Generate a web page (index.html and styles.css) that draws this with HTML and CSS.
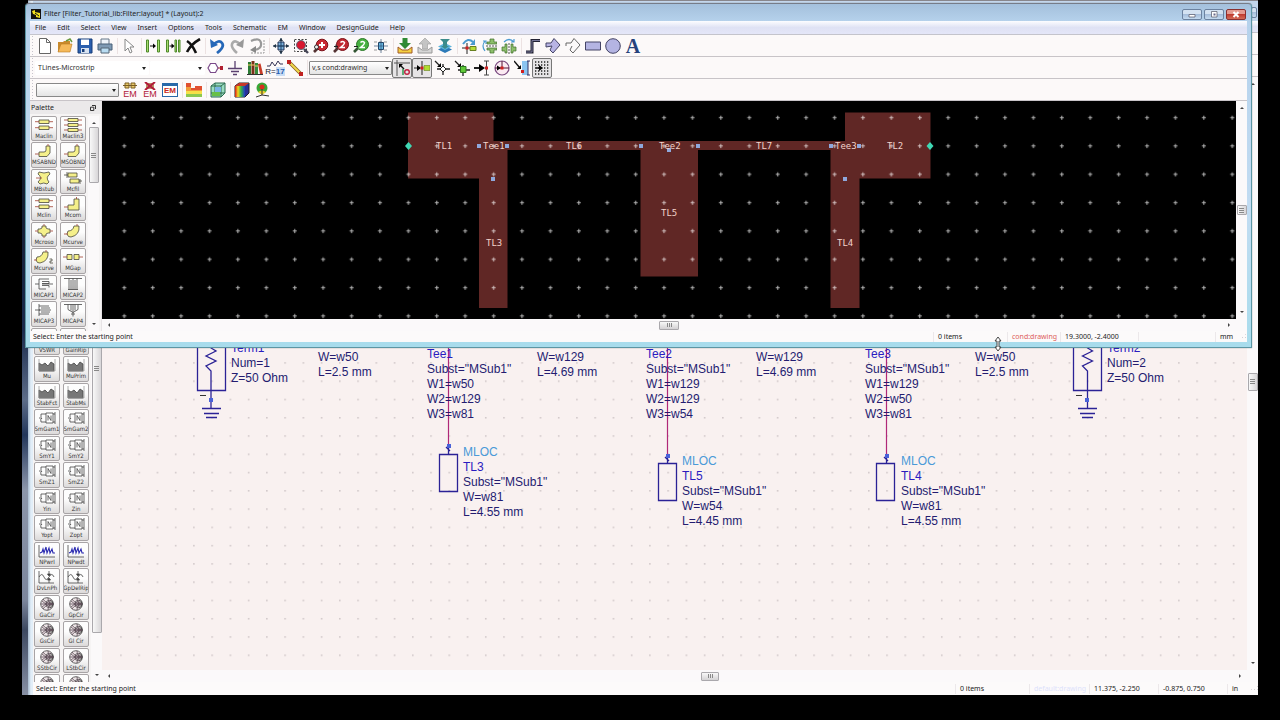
FILE: index.html
```html
<!DOCTYPE html>
<html lang="en">
<head>
<meta charset="utf-8">
<title>Filter [Filter_Tutorial_lib:Filter:layout] * (Layout):2</title>
<link rel="stylesheet" href="styles.css">
</head>
<body>
<svg class="sprite" aria-hidden="true">
  <defs>
    <linearGradient id="rainbow"><stop offset="0" stop-color="#d01818"/><stop offset=".3" stop-color="#f6d420"/><stop offset=".6" stop-color="#35b443"/><stop offset="1" stop-color="#2038c8"/></linearGradient>
    <pattern id="crosses" x="109.8" y="103.2" width="28.41" height="28.34" patternUnits="userSpaceOnUse"><path d="M12.5 14.5h4M14.5 12.5v4" stroke="#fff" stroke-opacity=".72"/></pattern>
    <pattern id="dots" x="111.5" y="353.5" width="18.24" height="18.27" patternUnits="userSpaceOnUse"><rect x="9" y="9" width="1" height="1" fill="#94888e"/></pattern>
  </defs>
  <symbol class="strip" id="p-lin" viewBox="0 0 20 14"><path d="M5 2h10v3.500H5zM5 8h10v3.500H5z"/><path d="M1 3.700h4m10 0h4M1 9.700h4m10 0h4" stroke="#a04030"/></symbol>
  <symbol class="strip" id="p-lin3" viewBox="0 0 20 14"><path d="M5 .5h10v3H5zM5 5.500h10v3H5zM5 10.500h10v3H5z"/><path d="M1 2h4m10 0h4M1 7h4m10 0h4M1 12h4m10 0h4" stroke="#a04030"/></symbol>
  <symbol class="strip" id="p-bend" viewBox="0 0 20 14"><path d="M5 8h5q2 0 2-2V2h4v7l-3 3.500H5z"/><path d="M1 10h4M14 2V0" stroke="#a04030"/></symbol>
  <symbol class="strip" id="p-stub" viewBox="0 0 20 14"><path d="M5 1q5 2 10 0l1 2q-5 3.500-1 8l-2 2q-3-2-7 0l-2-2q5-4.500 0-8z"/><path d="M2 7h6" stroke="#a04030"/></symbol>
  <symbol class="strip" id="p-fil" viewBox="0 0 20 14"><path d="M5 2h9v4H5zM7 8h9v4H7z"/><path d="M4 1v6m13 1v5M1 4h4m11 6h3"/></symbol>
  <symbol class="strip" id="p-corn" viewBox="0 0 20 14"><path d="M5 8h6V2h5v11H5z"/><path d="M1 10h4M13.500 2V0" stroke="#a04030"/></symbol>
  <symbol class="strip" id="p-cros" viewBox="0 0 20 14"><path d="M8 2h4v2l2 1h2v4h-2l-2 1v2H8v-2L6 9H4V5h2l2-1z"/><path d="M1 7h3m12 0h3M10 2V0m0 12v2" stroke="#a04030"/></symbol>
  <symbol class="strip" id="p-curve" viewBox="0 0 20 14"><path d="M5 7q5 0 6-5h5q1 9-8 11-3 .5-4-3z"/><path d="M1 10h4M14 2V0" stroke="#a04030"/></symbol>
  <symbol class="strip" id="p-curve2" viewBox="0 0 20 14"><path d="M3 7q5 0 6-5h5q1 9-8 11-3 .5-4-3z"/><path d="M0 10h3M12 2V0" stroke="#a04030"/><path d="M15.500 9h2.500v2h-2v2h3" fill="none"/></symbol>
  <symbol class="strip" id="p-gap" viewBox="0 0 20 14"><path d="M4 4.500h5v5H4zM11 4.500h5v5h-5z"/><path d="M0 7h4m12 0h4" stroke="#a04030"/></symbol>
  <symbol class="line" id="p-cap1" viewBox="0 0 20 14"><path d="M1 7h4M5 2v10M5 2h10M8 4.500h7v2H8M8 8.500h7v2M5 12h7M15 7h4M8 7h7"/></symbol>
  <symbol class="line" id="p-cap2" viewBox="0 0 20 14"><path d="M1 1.500h18M6 1.500v11M8 3v9.500M10 1.500v11M12 3v9.500M14 1.500v11M5 12.500h10"/></symbol>
  <symbol class="line" id="p-cap3" viewBox="0 0 20 14"><path d="M1 7h5M5 1v12M5 3h10M7 5h9M5 7h12M7 9h9M5 11h10"/></symbol>
  <symbol class="line" id="p-cap4" viewBox="0 0 20 14"><path d="M1 1.500h18M5 1.500v5l5 3 5-3v-5M8 1.500v6M10 1.500v12M12 1.500v6M8 11h4"/></symbol>
  <symbol class="line" id="p-mu" viewBox="0 0 20 14"><path d="M2 13V5l3 2 3-2 3 3 3-4 3 2v7z" fill="#777"/><path d="M2 1v12h16V1" stroke="#999"/></symbol>
  <symbol class="line" id="p-n" viewBox="0 0 20 14"><path d="M9 2h7v10H9z" fill="#fff"/><path d="M11 9.500v-5l3 5v-5M4 3h5M4 11h5M16 3h2M16 11h2M18 1v12M4 3v3M2 7h3q-2 1-1 4"/></symbol>
  <symbol class="line" id="p-nf" viewBox="0 0 20 14"><path d="M2 1v12h16"/><path d="M3 9l2-1 1-3 1 4 2-6 1 6 2-5 1 5 2-4 1 4h2" stroke="#2a2ab0" stroke-width="1.100"/></symbol>
  <symbol class="line" id="p-dv" viewBox="0 0 20 14"><path d="M2 1v12h15M2 7q3-5 5 0t5 0 5 0M12 1v4M12 9v4"/><path d="M10.500 4h3L12 6zM10.500 10h3L12 8z" fill="#333"/></symbol>
  <symbol class="line" id="p-smith" viewBox="0 0 20 14"><circle cx="10" cy="7" r="6.300" fill="#ece4e6"/><circle cx="12.500" cy="7" r="3.700"/><circle cx="14" cy="7" r="2"/><path d="M3.700 7h12.600M6 2q3 5 10 5Q9 7 6 12M11 .8q0 6 5 6.200-5 0-5 6.200M5 4l9 7M5 10l9-7" stroke="#5c4a56"/></symbol>
</svg>

<main class="desktop">

  <section class="win win-back" aria-label="Schematic window">
    <div class="titlebar"><span class="title"></span><button class="wbtn edge" aria-label="Close schematic"></button></div>
    <div class="menubar"></div>
    <div class="toolbar"></div>
    <div class="toolbar"></div>
    <div class="main">
      <aside class="dock">
        <div class="dock-head"></div>
        <div class="dock-body">
          <div class="parts scrolled">
            <button class="part"><svg><use href="#p-n"/></svg>VSWR</button><button class="part"><svg><use href="#p-n"/></svg>GainRip</button>
            <button class="part"><svg><use href="#p-mu"/></svg>Mu</button><button class="part"><svg><use href="#p-mu"/></svg>MuPrim</button>
            <button class="part"><svg><use href="#p-mu"/></svg>StabFct</button><button class="part"><svg><use href="#p-mu"/></svg>StabMs</button>
            <button class="part"><svg><use href="#p-n"/></svg>SmGam1</button><button class="part"><svg><use href="#p-n"/></svg>SmGam2</button>
            <button class="part"><svg><use href="#p-n"/></svg>SmY1</button><button class="part"><svg><use href="#p-n"/></svg>SmY2</button>
            <button class="part"><svg><use href="#p-n"/></svg>SmZ1</button><button class="part"><svg><use href="#p-n"/></svg>SmZ2</button>
            <button class="part"><svg><use href="#p-n"/></svg>Yin</button><button class="part"><svg><use href="#p-n"/></svg>Zin</button>
            <button class="part"><svg><use href="#p-n"/></svg>Yopt</button><button class="part"><svg><use href="#p-n"/></svg>Zopt</button>
            <button class="part"><svg><use href="#p-nf"/></svg>NPwrI</button><button class="part"><svg><use href="#p-nf"/></svg>NPwdt</button>
            <button class="part"><svg><use href="#p-dv"/></svg>DvLnPh</button><button class="part"><svg><use href="#p-dv"/></svg>GpDelRip</button>
            <button class="part"><svg><use href="#p-smith"/></svg>GaCir</button><button class="part"><svg><use href="#p-smith"/></svg>GpCir</button>
            <button class="part"><svg><use href="#p-smith"/></svg>GsCir</button><button class="part"><svg><use href="#p-smith"/></svg>Gl Cir</button>
            <button class="part"><svg><use href="#p-smith"/></svg>SStbCir</button><button class="part"><svg><use href="#p-smith"/></svg>LStbCir</button>
            <button class="part"><svg><use href="#p-smith"/></svg></button><button class="part"><svg><use href="#p-smith"/></svg></button>
          </div>
          <div class="vbar"><i class="up"></i><div class="thumb thumb-long"></div><i class="down"></i></div>
        </div>
      </aside>
      <div class="view">
        <div class="view-row">
          <svg class="canvas schematic" role="img" aria-label="Schematic">
            <g transform="translate(-102 -77)">
              <rect x="111" y="80" width="1128" height="582" fill="url(#dots)" shape-rendering="crispEdges"/>
              <g fill="none" stroke="#2b2296" stroke-width="1.300">
                <path d="M197.500 340v50.500h28V340M211 340v8l5 3-10 5 10 5-10 5 5 5V408"/>
                <path d="M202 408.500h19M204 413.500h15M206 417.500h11"/>
                <path d="M1073.500 340v50.500h28V340M1087.500 340v8l5 3-10 5 10 5-10 5 5 5V408"/>
                <path d="M1078 408.500h19M1080 413.500h15M1082 417.500h11"/>
                <path d="M439.500 454.500h18v37h-18zM658.500 463.500h18v37h-18zM876.500 463.500h18v37h-18z"/>
                <path d="M448.500 446v8M446 447l4 4M667.500 456v7M665 457l4 4M886.500 456v7M884 457l4 4"/>
              </g>
              <path d="M200 395.500h6M1076 395.500h6" stroke="#333"/>
              <path d="M448.500 340v106M667.500 340v116M886.500 340v116" stroke="#b02878" stroke-width="1.200"/>
              <g fill="#4a62d8"><rect x="209" y="398" width="4" height="4"/><rect x="1085" y="398" width="4" height="4"/><rect x="447" y="444" width="4" height="4"/><rect x="666" y="454" width="4" height="4"/><rect x="885" y="454" width="4" height="4"/></g>
              <g class="notes">
                <text y="352"><tspan class="id" x="231">Term1</tspan><tspan x="231" dy="15">Num=1</tspan><tspan x="231" dy="15">Z=50 Ohm</tspan></text>
                <text y="361"><tspan x="318">W=w50</tspan><tspan x="318" dy="15">L=2.5 mm</tspan></text>
                <text y="358"><tspan class="id" x="427">Tee1</tspan><tspan x="427" dy="15">Subst="MSub1"</tspan><tspan x="427" dy="15">W1=w50</tspan><tspan x="427" dy="15">W2=w129</tspan><tspan x="427" dy="15">W3=w81</tspan></text>
                <text y="361"><tspan x="537">W=w129</tspan><tspan x="537" dy="15">L=4.69 mm</tspan></text>
                <text y="358"><tspan class="id" x="646">Tee2</tspan><tspan x="646" dy="15">Subst="MSub1"</tspan><tspan x="646" dy="15">W1=w129</tspan><tspan x="646" dy="15">W2=w129</tspan><tspan x="646" dy="15">W3=w54</tspan></text>
                <text y="361"><tspan x="756">W=w129</tspan><tspan x="756" dy="15">L=4.69 mm</tspan></text>
                <text y="358"><tspan class="id" x="865">Tee3</tspan><tspan x="865" dy="15">Subst="MSub1"</tspan><tspan x="865" dy="15">W1=w129</tspan><tspan x="865" dy="15">W2=w50</tspan><tspan x="865" dy="15">W3=w81</tspan></text>
                <text y="361"><tspan x="975">W=w50</tspan><tspan x="975" dy="15">L=2.5 mm</tspan></text>
                <text y="352"><tspan class="id" x="1107">Term2</tspan><tspan x="1107" dy="15">Num=2</tspan><tspan x="1107" dy="15">Z=50 Ohm</tspan></text>
                <text y="456"><tspan class="kind" x="463">MLOC</tspan><tspan class="id" x="463" dy="15">TL3</tspan><tspan x="463" dy="15">Subst="MSub1"</tspan><tspan x="463" dy="15">W=w81</tspan><tspan x="463" dy="15">L=4.55 mm</tspan></text>
                <text y="465"><tspan class="kind" x="682">MLOC</tspan><tspan class="id" x="682" dy="15">TL5</tspan><tspan x="682" dy="15">Subst="MSub1"</tspan><tspan x="682" dy="15">W=w54</tspan><tspan x="682" dy="15">L=4.45 mm</tspan></text>
                <text y="465"><tspan class="kind" x="901">MLOC</tspan><tspan class="id" x="901" dy="15">TL4</tspan><tspan x="901" dy="15">Subst="MSub1"</tspan><tspan x="901" dy="15">W=w81</tspan><tspan x="901" dy="15">L=4.55 mm</tspan></text>
              </g>
            </g>
          </svg>
          <div class="vbar"><i class="up"></i><div class="thumb thumb-mid"></div><i class="down"></i></div>
        </div>
        <div class="hbar"><i class="left"></i><div class="thumb"></div><i class="right"></i></div>
      </div>
    </div>
    <footer class="status">
      <span class="msg">Select: Enter the starting point</span>
      <span class="f-items">0 items</span><span class="f-layer dim">default:drawing</span><span class="f-pos">11.375, -2.250</span><span class="f-delta">-0.875, 0.750</span><span class="f-unit">in</span><i class="grip"></i>
    </footer>
  </section>

  <section class="win win-front" aria-label="Layout window">
    <div class="titlebar">
      <svg class="logo" viewBox="0 0 10 10"><path d="M0 0h10v10H0z" fill="#111"/><path d="M1 2l3-1v2l5 1v5L5 8V6L2 5z" fill="#f0e020"/><path d="M4 4l4 3" stroke="#111"/></svg>
      <span class="title">Filter [Filter_Tutorial_lib:Filter:layout] * (Layout):2</span>
      <button class="wbtn" aria-label="Minimize"><svg viewBox="0 0 18 9"><path d="M6 4.500h6v2.500H6z" fill="#fff" stroke="#556" stroke-width=".7"/></svg></button>
      <button class="wbtn" aria-label="Maximize"><svg viewBox="0 0 18 9"><path d="M6.500 1.500h5.500v5.500H6.500z" fill="#fff" stroke="#556" stroke-width=".7"/><path d="M8.500 3.500h2v2h-2z" fill="#668"/></svg></button>
      <button class="wbtn close" aria-label="Close"><svg viewBox="0 0 18 9"><path d="M6.500 2l5 5m0-5l-5 5" stroke="#fff" stroke-width="2"/></svg></button>
    </div>
    <nav class="menubar"><button>File</button><button>Edit</button><button>Select</button><button>View</button><button>Insert</button><button>Options</button><button>Tools</button><button>Schematic</button><button>EM</button><button>Window</button><button>DesignGuide</button><button>Help</button></nav>

    <div class="toolbar">
      <button aria-label="New"><svg viewBox="0 0 16 16"><path d="M2.500 .5h7l4 4v11h-11z" fill="#fff" stroke="#666"/><path d="M9.500 .5v4h4" fill="none" stroke="#666"/></svg></button>
      <button aria-label="Open"><svg viewBox="0 0 16 16"><path d="M1 4h5l1-1h6v11H1z" fill="#c98a2c"/><path d="M1 14l3-8h11l-2 8z" fill="#f5b95a" stroke="#b87820" stroke-width=".6"/><path d="M9 3l4-2 2 3" fill="none" stroke="#6a9a40" stroke-width="1.500"/></svg></button>
      <button aria-label="Save"><svg viewBox="0 0 16 16"><path d="M1 1h14v14H1z" fill="#2b5fae" stroke="#173c78"/><path d="M4 1.500h8V7H4z" fill="#fff"/><path d="M4 10h8v5H4z" fill="#d8e2f0"/><path d="M5 11h2.500v3H5z" fill="#173c78"/></svg></button>
      <button aria-label="Print"><svg viewBox="0 0 16 16"><path d="M4 1h8v6H4z" fill="#eef4fa" stroke="#678"/><path d="M1 6h14v6H1z" fill="#7e9ab4" stroke="#486078"/><path d="M4 10h8v5H4z" fill="#b9dcf2" stroke="#567"/></svg></button>
      <i class="sep"></i>
      <button aria-label="Pointer"><svg viewBox="0 0 16 16"><path d="M4 1v12l3-3 2 5 2-1-2-5h4z" fill="#fff" stroke="#888"/></svg></button>
      <i class="sep"></i>
      <button aria-label="Stretch"><svg viewBox="0 0 16 16"><path d="M1.500 2h2v12h-2zM12.500 2h2v12h-2z" fill="#a8dc70" stroke="#4f8a2a"/><path d="M5 8h4" stroke="#111"/><path d="M8 5.500L11 8l-3 2.500z"/></svg></button>
      <button aria-label="Copy"><svg viewBox="0 0 16 16"><path d="M1.500 2h2v12h-2zM10 2h1.500v12H10zM13.500 2H15v12h-1.500z" fill="#a8dc70" stroke="#4f8a2a"/><path d="M4.500 8h3" stroke="#111"/><path d="M6.500 5.500l3 2.500-3 2.500z"/></svg></button>
      <button aria-label="Delete"><svg viewBox="0 0 16 16"><path d="M2 3q5 3 9 12M15 1Q6 6 2 14" fill="none" stroke="#111" stroke-width="2.600"/></svg></button>
      <i class="sep"></i>
      <button aria-label="Undo"><svg viewBox="0 0 16 16"><path d="M4 7q6-6 9-2t-5 10" fill="none" stroke="#2668b8" stroke-width="2.800"/><path d="M1 1l1 9 7-3z" fill="#2668b8"/></svg></button>
      <button aria-label="Redo"><svg viewBox="0 0 16 16"><path d="M12 7Q6 1 3.500 5T8 15" fill="none" stroke="#aaa" stroke-width="2.600"/><path d="M15 1l-1 9-7-3z" fill="#999"/></svg></button>
      <button aria-label="Undo view"><svg viewBox="0 0 16 16"><path d="M2 3q9-4 10 2t-7 7" fill="none" stroke="#999" stroke-width="2.200"/><path d="M7 8v7l-6-3z" fill="#888"/><path d="M2 15h13V2" fill="none" stroke="#999" stroke-dasharray="2 1"/></svg></button>
      <i class="sep"></i>
      <button aria-label="View all"><svg viewBox="0 0 16 16"><path d="M5 4h6v8H5z" fill="#7ab0dc" stroke="#235"/><path d="M8 0v16M0 8h16M5 8h6" stroke="#246"/><path d="M8 0L6 3h4zM8 16l-2-3h4zM0 8l3-2v4zM16 8l-3-2v4z" fill="#234"/></svg></button>
      <button aria-label="Zoom area"><svg viewBox="0 0 16 16"><path d="M1.500 1.500h12v12h-12z" fill="none" stroke="#444" stroke-dasharray="2 1.500"/><circle cx="8" cy="7" r="4.500" fill="#d81830" stroke="#667" /><path d="M11 11l4 4" stroke="#445" stroke-width="2.400"/></svg></button>
      <button aria-label="Zoom in"><svg viewBox="0 0 16 16"><path d="M5 10l-4 4" stroke="#533" stroke-width="2.600"/><circle cx="9" cy="7" r="5.800" fill="#c82832" stroke="#7c1018"/><path d="M9 4v6M6 7h6" stroke="#fff" stroke-width="2"/><circle cx="3.500" cy="9" r="2" fill="#eee" stroke="#333"/></svg></button>
      <button aria-label="Zoom in by 2"><svg viewBox="0 0 16 16"><path d="M5 10l-4 4" stroke="#533" stroke-width="2.600"/><circle cx="9.500" cy="6.500" r="6" fill="#c02830" stroke="#7c1018"/><path d="M7.500 4.500q2-2 4 0 0 2-4 5h4.500" fill="none" stroke="#fff" stroke-width="1.500"/><path d="M1 8.500h4M3 6.500v4" stroke="#222"/></svg></button>
      <button aria-label="Zoom out by 2"><svg viewBox="0 0 16 16"><path d="M5 10l-4 4" stroke="#353" stroke-width="2.600"/><circle cx="9.500" cy="6.500" r="6" fill="#46b040" stroke="#2c7828"/><path d="M7.500 4.500q2-2 4 0 0 2-4 5h4.500" fill="none" stroke="#fff" stroke-width="1.500"/><path d="M1 8.500h4" stroke="#222"/></svg></button>
      <button aria-label="Center view"><svg viewBox="0 0 16 16"><path d="M1 4h14M1 12h14" stroke="#999" stroke-dasharray="3 2"/><path d="M5.500 4.500h5v7h-5z" fill="#68b8e4" stroke="#246"/><path d="M8 1v14M1 8h14" stroke="#357" stroke-width=".7"/></svg></button>
      <i class="sep"></i>
      <button aria-label="Push into"><svg viewBox="0 0 16 16"><path d="M1 9l4 3h6l4-3v6H1z" fill="#f4d040" stroke="#a05a28"/><path d="M5.500 0h5v5H14l-6 6-6-6h3.500z" fill="#2f8a34"/></svg></button>
      <button aria-label="Pop out"><svg viewBox="0 0 16 16"><path d="M1 9l4 3h6l4-3v6H1z" fill="#d6d6d6" stroke="#999"/><path d="M5.500 11h5V6H14L8 0 2 6h3.500z" fill="#c4c4c4" stroke="#999" stroke-width=".6"/></svg></button>
      <button aria-label="Layers"><svg viewBox="0 0 16 16"><path d="M8 8l7 3.500L8 15l-7-3.500z" fill="#2c7ab8"/><path d="M8 5l7 3.500L8 12 1 8.500z" fill="#5ab4dc"/><path d="M3 1h10l-3 3v4h2l-4 3-4-3h2V4z" fill="#3c8c8c"/></svg></button>
      <i class="sep"></i>
      <button aria-label="Rotate"><svg viewBox="0 0 16 16"><path d="M2 6Q7-1 12 4" fill="none" stroke="#4a9ad0" stroke-width="2"/><path d="M14 1v6H9z" fill="#4a9ad0"/><path d="M6 5v11M1 10h8" stroke="#222"/><path d="M9 8.500h6v4H9z" fill="#b6dc38" stroke="#678020"/><path d="M4.500 8.500h3v3h-3z" fill="#d02020"/></svg></button>
      <button aria-label="Mirror about X"><svg viewBox="0 0 16 16"><path d="M4 3Q0 8 4 13M2 3h3v3" fill="none" stroke="#4a9ad0" stroke-width="1.200"/><path d="M5 8h11" stroke="#555" stroke-dasharray="2 1"/><path d="M6 4h3V1h4v3h3v2H6zM6 10h10v2h-3v3H9v-3H6z" fill="#8cbf6a" stroke="#3f6e2c" stroke-width=".7"/></svg></button>
      <button aria-label="Mirror about Y"><svg viewBox="0 0 16 16"><path d="M3 4q5-5 10 0M13 1v3h-3" fill="none" stroke="#4a9ad0" stroke-width="1.200"/><path d="M8 5v11" stroke="#555" stroke-dasharray="2 1"/><path d="M4 6h2v9H4v-2H1V9h3zM10 6h2v3h3v4h-3v2h-2z" fill="#8cbf6a" stroke="#3f6e2c" stroke-width=".7"/></svg></button>
      <i class="sep"></i>
      <button aria-label="Trace"><svg viewBox="0 0 16 16"><path d="M1 14h6V2.500h8" fill="none" stroke="#223" stroke-width="3"/><path d="M1 14h6V2.500h8" fill="none" stroke="#8a8ab0" stroke-width=".8"/></svg></button>
      <button aria-label="Polygon"><svg viewBox="0 0 16 16"><path d="M1 9V5h5l3-4.500L15 7l-7 8-3-3 2-4z" fill="#b8b4e4" stroke="#446"/></svg></button>
      <button aria-label="Polyline"><svg viewBox="0 0 16 16"><path d="M1 8V5h5l3-4.500L15 7l-7 8-3-3 2-4" fill="none" stroke="#666"/></svg></button>
      <button aria-label="Rectangle"><svg viewBox="0 0 16 16"><path d="M.5 4h15v8H.5z" fill="#b4b4e2" stroke="#446"/></svg></button>
      <button aria-label="Circle"><svg viewBox="0 0 16 16"><circle cx="8" cy="8" r="7.300" fill="#b4b4e2" stroke="#446"/></svg></button>
      <button class="letter" aria-label="Text">A</button>
    </div>

    <div class="toolbar">
      <label class="combo flat lib"><select aria-label="Palette group"><option>TLines-Microstrip</option></select></label>
      <label class="combo flat hist"><select aria-label="Component history"><option></option></select></label>
      <button aria-label="Port"><svg viewBox="0 0 16 16"><path d="M3.500 3.500h5L11 8l-2.500 4.500h-5L1 8z" fill="#fff" stroke="#7a4a8a" stroke-width="1.200"/><path d="M11 8h3" stroke="#a02838"/><path d="M13 6h3v4h-3z" fill="#b02030"/></svg></button>
      <button aria-label="Ground"><svg viewBox="0 0 16 16"><path d="M8 1v7M1 8.500h14M4 11.500h8M6 14.500h4" stroke="#5a4070" stroke-width="1.300"/></svg></button>
      <button aria-label="Library"><svg viewBox="0 0 16 16"><path d="M1 2h3v12H1z" fill="#2c7a34"/><path d="M4.500 1h3v13h-3z" fill="#7a3018"/><path d="M8 3h3v11H8z" fill="#388a3c"/><path d="M11 4l2.500-.5L16 14h-3z" fill="#c83c28"/><path d="M1 5h6.500M8 6h3" stroke="#f0d060"/><path d="M0 14.500h16" stroke="#333"/></svg></button>
      <button class="var" aria-label="Variable"><svg viewBox="0 0 16 8"><path d="M0 6h3l2-4 3 4 3-5 2 3h3" fill="none" stroke="#335"/></svg><span>R=<b>17</b></span></button>
      <button aria-label="Wire"><svg viewBox="0 0 16 16"><path d="M2 2l12 12" stroke="#8a6020" stroke-width="3.500"/><path d="M2.500 2.500l11 11" stroke="#f0d84c" stroke-width="2"/><path d="M0 0h4v4H0zM12 12h4v4h-4z" fill="#c02020"/></svg></button>
      <i class="sep"></i>
      <label class="combo layer"><select aria-label="Entry layer"><option>v,s cond:drawing</option></select></label>
      <button class="on" aria-label="Snap enabled"><svg viewBox="0 0 16 16"><path d="M0 3h16M3 0v16" stroke="#555"/><path d="M6 5l4 4" stroke="#111" stroke-width="1.400"/><path d="M5 4h4L5 8z"/><path d="M9 9v6" stroke="#2c9a50" stroke-width="1.500"/><circle cx="13" cy="12" r="2.300" fill="none" stroke="#c02040" stroke-width="1.400"/></svg></button>
      <button class="on" aria-label="Pin snap"><svg viewBox="0 0 16 16"><path d="M0 8h6M8 1v14" stroke="#222"/><path d="M3 5l4 3-4 3z"/><path d="M6.500 6.500h3v3h-3z" fill="#d02020"/><path d="M10 5.500h6v5h-6z" fill="#b0dc30" stroke="#688020" stroke-width=".6"/></svg></button>
      <button aria-label="Vertex snap"><svg viewBox="0 0 16 16"><path d="M1 1l5 5M9 4v11M3 9h13" stroke="#222" stroke-width="1.300"/><path d="M7 7V3L3 7z"/><path d="M9 6l3 3-3 3-3-3z" fill="#fff" stroke="#222"/></svg></button>
      <button aria-label="Intersect snap"><svg viewBox="0 0 16 16"><path d="M1 1l5 5M9 5v11M4 10h12" stroke="#222" stroke-width="1.300"/><path d="M7 7V3L3 7z"/><path d="M6.500 6.500h5.500v6H6.500z" fill="#60c838" stroke="#2c7820"/></svg></button>
      <button aria-label="Edge snap"><svg viewBox="0 0 16 16"><path d="M0 8h7" stroke="#222" stroke-width="2"/><path d="M10 1h5M10 15h5M12.500 1v14" stroke="#444"/><path d="M5 4l6 4-6 4z"/><path d="M11 6.500h3v3h-3z" fill="#d02020"/></svg></button>
      <button aria-label="Center snap"><svg viewBox="0 0 16 16"><circle cx="8" cy="8" r="7" fill="#fbeaf2" stroke="#7a4a80" stroke-width="1.200"/><path d="M1 8h14M8 1v8" stroke="#513"/><path d="M3 5.500L7 8l-4 2.500z"/><path d="M6.500 6.500h3v3h-3z" fill="#d02020"/></svg></button>
      <button aria-label="Distance snap"><svg viewBox="0 0 16 16"><path d="M8 1h6v14H8z" fill="#8cc4f0"/><path d="M13 1h3M13 15h3M14 1v14" stroke="#336" /><path d="M0 1l6 7" stroke="#111" stroke-width="1.400"/><path d="M7 9V5L3 9z"/><path d="M7 10h3v3H7z" fill="#d02020"/></svg></button>
      <button class="on" aria-label="Grid snap"><svg viewBox="0 0 16 16"><path d="M1 2h15M1 5h15M1 8h15M1 11h15M1 14h15" stroke="#222" stroke-width="1.300" stroke-dasharray="1.300 1.700"/><path d="M2 8h5" stroke="#111" stroke-width="1.500"/><path d="M5 5l4 3-4 3z"/></svg></button>
    </div>

    <div class="toolbar">
      <label class="combo setup"><select aria-label="EM setup"><option></option></select></label>
      <button class="em" aria-label="EM settings"><svg viewBox="0 0 16 8"><path d="M3 1h4v5H3zM9 1h4v5H9z" fill="#e8c868" stroke="#7a5c20"/><path d="M1 3.500h14" stroke="#7a5c20"/></svg>EM</button>
      <button class="em" aria-label="EM stop"><svg viewBox="0 0 16 8"><path d="M4 1h8v6H4z" fill="#b89060"/><path d="M3 0l10 8m0-8L3 8" stroke="#b01838" stroke-width="2"/></svg>EM</button>
      <button class="emwin" aria-label="EM window"><span>EM</span></button>
      <i class="sep"></i>
      <button aria-label="Substrate"><svg viewBox="0 0 16 16"><path d="M0 1h5v5h4V4h7v4H0z" fill="#e05030"/><path d="M0 5h5v3h11v2H0z" fill="#f09a38"/><path d="M0 9h16v3H0z" fill="#f6e048"/><path d="M0 12h16v3H0z" fill="#8cc850"/></svg></button>
      <i class="sep"></i>
      <button aria-label="3D view"><svg viewBox="0 0 16 16"><path d="M1 4l4-3h10v10l-4 4H1z" fill="#9adcc0" stroke="#2c6a50"/><path d="M1 4h10v11M11 4l4-3M5 1v10H1M5 11h10" fill="none" stroke="#2c6a50"/><path d="M2 10h8v4H2z" fill="#68c048"/><path d="M5 5h6v5H5z" fill="#78b4e4"/></svg></button>
      <i class="sep"></i>
      <button aria-label="Mesh"><svg viewBox="0 0 16 16"><path d="M1 4l4-3h10v10l-4 4H1z" fill="#28309a" stroke="#222"/><path d="M1 4h10v11H1z" fill="url(#rainbow)"/><path d="M1 4l4-3h10l-4 3z" fill="#c83828"/></svg></button>
      <button aria-label="Radiation"><svg viewBox="0 0 16 16"><circle cx="8" cy="6" r="5.500" fill="#38a838"/><circle cx="8" cy="5" r="2.500" fill="#d83020"/><path d="M4 10q4-3 8 0l-4 3z" fill="#f0d030"/><path d="M8 7v6M8 13l-6 2M8 13l7 1" stroke="#333"/></svg></button>
    </div>

    <div class="main">
      <aside class="dock">
        <div class="dock-head">Palette <button aria-label="Float palette"><svg viewBox="0 0 6 6"><path d="M2 .5h3.500V4M.5 2.200h3.300v3.300H.5z" fill="none" stroke="#333"/></svg></button></div>
        <div class="dock-body">
          <div class="parts">
            <button class="part"><svg><use href="#p-lin"/></svg>Maclin</button><button class="part"><svg><use href="#p-lin3"/></svg>Maclin3</button>
            <button class="part"><svg><use href="#p-bend"/></svg>MSABND</button><button class="part"><svg><use href="#p-bend"/></svg>MSOBND</button>
            <button class="part"><svg><use href="#p-stub"/></svg>MBstub</button><button class="part"><svg><use href="#p-fil"/></svg>Mcfil</button>
            <button class="part"><svg><use href="#p-lin"/></svg>Mclin</button><button class="part"><svg><use href="#p-corn"/></svg>Mcorn</button>
            <button class="part"><svg><use href="#p-cros"/></svg>Mcroso</button><button class="part"><svg><use href="#p-curve"/></svg>Mcurve</button>
            <button class="part"><svg><use href="#p-curve2"/></svg>Mcurve</button><button class="part"><svg><use href="#p-gap"/></svg>MGap</button>
            <button class="part"><svg><use href="#p-cap1"/></svg>MICAP1</button><button class="part"><svg><use href="#p-cap2"/></svg>MICAP2</button>
            <button class="part"><svg><use href="#p-cap3"/></svg>MICAP3</button><button class="part"><svg><use href="#p-cap4"/></svg>MICAP4</button>
            <button class="part"></button><button class="part"></button>
          </div>
          <div class="vbar"><i class="up"></i><div class="thumb thumb-top"></div><i class="down"></i></div>
        </div>
      </aside>
      <div class="view">
        <div class="view-row">
          <svg class="canvas layout" role="img" aria-label="Filter layout">
            <g transform="translate(-102 -101)">
              <path fill="#602725" d="M408 112.500h85.500v28.500H845v-28.500h85.500v66h-71V308h-29V150H698v126.500h-57.500V150h-133v158h-28.500V178.500h-71z"/>
              <rect x="110" y="103" width="1126" height="217" fill="url(#crosses)"/>
              <g fill="#8fa8dc"><rect x="477" y="144" width="4" height="4"/><rect x="505" y="144" width="4" height="4"/><rect x="639" y="144" width="4" height="4"/><rect x="696" y="144" width="4" height="4"/><rect x="667" y="148" width="4" height="4"/><rect x="829" y="144" width="4" height="4"/><rect x="857" y="144" width="4" height="4"/><rect x="491" y="177" width="4" height="4"/><rect x="843" y="177" width="4" height="4"/></g>
              <path fill="#3fd8b4" d="M408.500 142l3.500 4-3.500 4-3.500-4zM930 142l3.500 4-3.500 4-3.500-4z"/>
              <g class="tags"><text x="436" y="149">TL1</text><text x="483" y="149">Tee1</text><text x="566" y="149">TL6</text><text x="659" y="149">Tee2</text><text x="756" y="149">TL7</text><text x="835" y="149">Tee3</text><text x="887" y="149">TL2</text><text x="486" y="246">TL3</text><text x="661" y="216">TL5</text><text x="837" y="246">TL4</text></g>
            </g>
          </svg>
          <div class="vbar"><i class="up"></i><div class="thumb thumb-mid"></div><i class="down"></i></div>
        </div>
        <div class="hbar"><i class="left"></i><div class="thumb"></div><i class="right"></i></div>
      </div>
    </div>
    <footer class="status">
      <span class="msg">Select: Enter the starting point</span>
      <span class="f-items">0 items</span><span class="f-layer red">cond:drawing</span><span class="f-pos">19.3000, -2.4000</span><span class="f-delta"></span><span class="f-unit">mm</span><i class="grip"></i>
    </footer>
  </section>

  <svg class="cursor" viewBox="0 0 8 16" aria-hidden="true"><path d="M4 1L1 5h2v6H1l3 4 3-4H5V5h2z" fill="#fff" stroke="#333" stroke-width=".9"/></svg>
</main>
</body>
</html>
```
FILE: styles.css
```css
* { box-sizing: border-box; }
body { margin: 0; background: #000; font: 7px/10px "Noto Sans", "Open Sans", sans-serif; color: #222; }
button { font: inherit; color: inherit; padding: 0; margin: 0; border: 0; background: none; }
svg { display: block; }
.sprite { position: absolute; width: 0; height: 0; }
.strip { fill: #f5f08a; stroke: #4a4a3c; stroke-width: .8; }
.line { fill: none; stroke: #444; stroke-width: .8; }

.desktop { position: relative; overflow: hidden; height: calc(100vh - 25px); margin: 0 22px; background: linear-gradient(#000 0, #0c121c 90px, #1a2a4c 330px, #5c6c88 400px, #22365a 435px, #8c96aa 490px, #7c869c 600px, #3c4860 630px, #8890a4 695px); }

.win { position: absolute; display: flex; flex-direction: column; }
.win-back { left: 6px; right: 0; top: 0; bottom: 0; padding-left: 5px; background: linear-gradient(90deg, #a8bcd0, #e2eef8 3px, #c4dcf0); border-top: 1px solid #88868c; }
.win-front { left: 3px; right: 6px; top: 3px; padding: 0 4px 5px; border: 1px solid #5c96a4; border-top-color: #777c88; border-radius: 4px 4px 0 0; background: linear-gradient(#a4c0dc, #b6d2ec 18px, #c2dcf2 60%, #a8dcec); box-shadow: 0 0 1px #444; }

.titlebar { display: flex; align-items: center; gap: 2px; height: 17px; padding: 3px 1px 0; }
.win-back .titlebar { height: 20px; background: #c3d6ec; }
.logo { width: 10px; height: 10px; margin-right: 1px; }
.title { flex: 1; white-space: nowrap; }
.wbtn { width: 20px; height: 11px; border: 1px solid #6c82a0; border-radius: 2px; background: linear-gradient(#d4e2f2 45%, #a6bedb 50%, #c4daf0); }
.wbtn svg { width: 18px; height: 9px; }
.wbtn.close { border-color: #8a3030; background: linear-gradient(#e49a90 45%, #c03c30 50%, #d46c58); }
.wbtn.edge { width: 6px; }

.menubar { display: flex; gap: 1px; height: 14px; background: linear-gradient(#fcfdff, #dfe2f4 50%, #e4e6f8); border-bottom: 1px solid #c4c4cc; }
.win-back .menubar { height: 12px; }
.menubar button { padding: 0 5px; }

.toolbar { display: flex; align-items: center; height: 22px; padding-left: 5px; background: #fcf9f9; border-bottom: 1px solid #c8c4c8; }
.win-front .toolbar { background: radial-gradient(circle, #c8c4cc 0 1px, transparent 1px) 0 0 / 5px 3px repeat-y #fcf9f9; }
.toolbar button { display: flex; align-items: center; justify-content: center; width: 20px; height: 20px; flex: none; }
.toolbar button svg { width: 16px; height: 16px; flex: none; }
.toolbar .on { border: 1px solid #777; border-radius: 2px; background: #e6e4e6; }
.toolbar .sep { width: 4px; height: 16px; flex: none; background: linear-gradient(90deg, transparent 2px, #ece2e2 2px, #ece2e2 3px, transparent 3px); }
.toolbar .letter { font: bold 20px/20px "Liberation Serif", serif; color: #26427c; }
.toolbar .var, .toolbar .em { flex-direction: column; font: 8px/7px "Liberation Sans", sans-serif; color: #223; }
.toolbar .var svg, .toolbar .em svg { height: 8px; }
.toolbar .var b { color: #2860b0; background: #c8dcf4; }
.toolbar .em { color: #b01838; font-size: 9px; line-height: 8px; }
.emwin span { width: 16px; height: 14px; border: 1px solid #2868a8; border-top-width: 3px; background: #fff; color: #c82820; font: bold 8px/10px "Liberation Sans", sans-serif; }

.combo { position: relative; display: block; height: 14px; flex: none; border: 1px solid #888; border-radius: 1px; background: linear-gradient(#fff, #e4e4e4); }
.combo::after { content: ""; position: absolute; right: 2px; top: 5px; border: 2px solid transparent; border-top: 3px solid #222; pointer-events: none; }
.combo select { appearance: none; width: 100%; height: 12px; padding: 0 2px; border: 0; background: none; font: inherit; color: #333; display: block; }
.combo.flat { background: #fff; border-color: #fff; }
.lib { width: 114px; margin-right: 1px; }
.hist { width: 55px; }
.layer { width: 83px; }
.setup { width: 83px; margin: 0 1px; }

.main { display: flex; height: 230px; background: #fbf8f8; }
.win-back .main { height: auto; flex: 1; min-height: 0; }
.dock { display: flex; flex-direction: column; width: 72px; flex: none; background: #f6f4f4; border-right: 1px solid #e8e4e6; }
.win-back .dock { width: 69px; }
.dock-head { display: flex; justify-content: space-between; align-items: center; height: 13px; flex: none; padding: 0 5px 0 1px; background: #ebe9ea; }
.dock-head svg { width: 6px; height: 6px; }
.dock-body { display: flex; flex: 1; min-height: 0; padding-top: 2px; }
.parts { display: grid; grid-template-columns: 26px 26px; grid-auto-rows: 25px 26px; gap: 1px 3px; padding-left: 1px; width: 58px; flex: none; overflow: hidden; align-content: start; }
.scrolled { padding-top: 238px; }
.part { display: flex; flex-direction: column; align-items: center; overflow: hidden; border: 1px solid #a8a4a6; border-radius: 2px; background: linear-gradient(#fdfdfd 40%, #dcdada); font: 6px/7px "DejaVu Sans Condensed", "DejaVu Sans", sans-serif; color: #333; white-space: nowrap; }
.part svg { width: 20px; height: 14px; margin-top: 1px; flex: none; }

.vbar, .hbar { display: flex; background: #fbf9fa; }
.vbar { flex-direction: column; align-items: center; width: 11px; flex: none; padding: 4px 0; justify-content: space-between; }
.hbar { height: 12px; flex: none; align-items: center; justify-content: space-between; padding: 0 15px 0 4px; }
.vbar .thumb, .hbar .thumb { border: 1px solid #aaa8ac; border-radius: 1px; background: repeating-linear-gradient(#888 0 1px, transparent 1px 2px) center / 5px 5px no-repeat, linear-gradient(90deg, #f8f8f8, #d8d6d8); }
.hbar .thumb { width: 20px; height: 9px; background: repeating-linear-gradient(90deg, #888 0 1px, transparent 1px 2px) center / 5px 4px no-repeat, linear-gradient(#f8f8f8, #d4d2d4); }
.win-back .hbar .thumb { width: 18px; margin: 0 auto 0 52%; }
.vbar .thumb { width: 10px; }
.vbar .thumb-top { height: 56px; margin-bottom: auto; margin-top: 3px; }
.vbar .thumb-mid { height: 10px; }
.win-back .view .thumb-mid { height: 18px; margin-top: 16px; }
.vbar .thumb-long { height: 530px; margin: 3px 0 auto; }
.vbar i, .hbar i { width: 4px; height: 4px; border: 2px solid transparent; }
.up { border-bottom-color: #444 !important; border-top-width: 0 !important; }
.down { border-top-color: #444 !important; border-bottom-width: 0 !important; }
.left { border-right-color: #444 !important; border-left-width: 0 !important; }
.right { border-left-color: #444 !important; border-right-width: 0 !important; }

.view { display: flex; flex-direction: column; flex: 1; min-width: 0; }
.view-row { display: flex; flex: 1; min-height: 0; }
.canvas { flex: 1; min-width: 0; height: 100%; }
.layout { background: #000; }
.schematic { background: #f9f1f0; }
.tags { font: 9px "DejaVu Sans Mono", monospace; fill: #f2d2ca; }
.notes { font: 12px "Liberation Sans", Arial, sans-serif; fill: #241c70; }
.notes .id { fill: #2a1cc0; }
.notes .kind { fill: #4a9ad8; }

.status { display: flex; align-items: center; height: 11px; background: #fcfafa; white-space: nowrap; }
.win-back .status { height: 13px; }
.status span { border-left: 1px solid #ece8ea; padding-left: 4px; }
.status .msg { flex: 1; border: 0; padding-left: 3px; }
.f-items { width: 74px; }
.f-layer { width: 53px; }
.f-pos { width: 78px; }
.f-delta { width: 77px; height: 9px; }
.f-unit { width: 23px; }
.grip { width: 9px; height: 7px; background: radial-gradient(circle, #d4d0d4 1px, transparent 1px) 0 0 / 3px 3px; clip-path: polygon(100% 0, 100% 100%, 0 100%); }
.win-back .f-layer { width: 60px; }
.win-back .f-pos, .win-back .f-delta { width: 69px; }
.win-back .f-delta { height: auto; }
.win-back .f-unit { width: 20px; }
.win-back .grip { width: 11px; }
.status .red { color: #dc5f5a; }
.status .dim { color: #dde2fa; }

.cursor { position: absolute; left: 972px; top: 336px; width: 8px; height: 16px; }
```
